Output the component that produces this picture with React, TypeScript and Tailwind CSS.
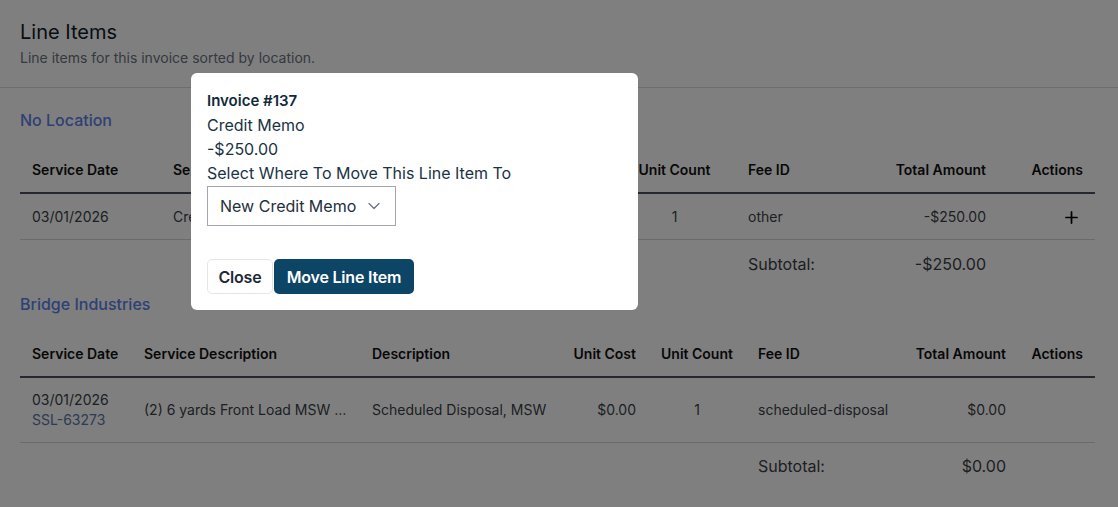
import { Plus, ChevronDown } from 'lucide-react';

type Row = {
  date: string;
  ref?: string;
  serviceDesc: string;
  desc: string;
  unitCost: string;
  unitCount: string;
  feeId: string;
  total: string;
  action?: boolean;
};

const sections: { title: string; widths: number[]; rows: Row[]; subtotal: string }[] = [
  {
    title: 'No Location',
    widths: [141, 239, 120, 93, 123, 134, 128, 97],
    rows: [
      {
        date: '03/01/2026',
        serviceDesc: 'Credit Memo',
        desc: 'Credit Memo',
        unitCost: '-$250.00',
        unitCount: '1',
        feeId: 'other',
        total: '-$250.00',
        action: true,
      },
    ],
    subtotal: '-$250.00',
  },
  {
    title: 'Bridge Industries',
    widths: [112, 228, 200, 88, 98, 154, 118, 77],
    rows: [
      {
        date: '03/01/2026',
        ref: 'SSL-63273',
        serviceDesc: '(2) 6 yards Front Load MSW Service',
        desc: 'Scheduled Disposal, MSW',
        unitCost: '$0.00',
        unitCount: '1',
        feeId: 'scheduled-disposal',
        total: '$0.00',
      },
    ],
    subtotal: '$0.00',
  },
];

function LineItemTable({ widths, rows, subtotal }: { widths: number[]; rows: Row[]; subtotal: string }) {
  return (
    <table className="w-[1075px] table-fixed border-collapse text-sm">
      <colgroup>
        {widths.map((w, i) => (
          <col key={i} style={{ width: w }} />
        ))}
      </colgroup>
      <thead>
        <tr className="h-[45px] border-b-2 border-[#4b5060] text-[#111] whitespace-nowrap">
          <th className="px-3 text-left font-semibold">Service Date</th>
          <th className="px-3 text-left font-semibold">Service Description</th>
          <th className="px-3 text-left font-semibold">Description</th>
          <th className="px-3 text-right font-semibold">Unit Cost</th>
          <th className="px-3 text-center font-semibold">Unit Count</th>
          <th className="px-3 text-left font-semibold">Fee ID</th>
          <th className="px-3 text-right font-semibold">Total Amount</th>
          <th className="px-3 text-right font-semibold">Actions</th>
        </tr>
      </thead>
      <tbody className="text-[#3a3f47] whitespace-nowrap">
        {rows.map((r, i) => (
          <tr key={i} className="border-b border-[#d4d6da]">
            <td className="px-3 py-3 leading-5">
              <div>{r.date}</div>
              {r.ref && <div className="text-[#5b76a8]">{r.ref}</div>}
            </td>
            <td className="px-3 py-3 leading-5 truncate">{r.serviceDesc}</td>
            <td className="px-3 py-3 leading-5 truncate">{r.desc}</td>
            <td className="px-3 py-3 leading-5 text-right">{r.unitCost}</td>
            <td className="px-3 py-3 leading-5 text-center">{r.unitCount}</td>
            <td className="px-3 py-3 leading-5">{r.feeId}</td>
            <td className="px-3 py-3 leading-5 text-right">{r.total}</td>
            <td className="px-3 py-3 leading-5 text-right">
              {r.action && (
                <span className="inline-flex h-5 items-center justify-end align-middle text-black">
                  <Plus className="w-[19px] h-[19px] mr-[2px]" strokeWidth={2.2} />
                </span>
              )}
            </td>
          </tr>
        ))}
        <tr className="h-12 text-base">
          <td colSpan={5}></td>
          <td className="px-3">Subtotal:</td>
          <td className="px-3 text-right">{subtotal}</td>
          <td></td>
        </tr>
      </tbody>
    </table>
  );
}

export default function App() {
  return (
    <div className="relative min-h-[507px] bg-white font-['Inter',sans-serif] text-[#111827]">
      {/* Header */}
      <div className="px-5 pt-[18px] pb-[19px] border-b border-[#d9dbe0]">
        <h1 className="text-xl leading-7">Line Items</h1>
        <p className="mt-0.5 text-sm leading-5 text-[#6b7280]">Line items for this invoice sorted by location.</p>
      </div>

      <div className="px-5 pt-5">
        {sections.map((s, i) => (
          <div key={s.title} className={i > 0 ? 'mt-1' : ''}>
            <h3 className="text-base leading-6 font-medium text-[#5a82ea]">{s.title}</h3>
            <div className="mt-4">
              <LineItemTable widths={s.widths} rows={s.rows} subtotal={s.subtotal} />
            </div>
          </div>
        ))}
      </div>

      {/* Overlay */}
      <div className="fixed inset-0 bg-black/50" />

      {/* Modal */}
      <div className="absolute left-[191px] top-[73px] w-[447px] h-[237px] bg-white rounded-md p-4 text-[#1a3344]">
        <div className="text-[15px] leading-6 font-semibold text-[#0f2a3b]">Invoice #137</div>
        <div className="text-base leading-6">Credit Memo</div>
        <div className="text-base leading-6">-$250.00</div>
        <div className="text-base leading-6">Select Where To Move This Line Item To</div>
        <div className="mt-px flex h-10 w-[189px] items-center justify-between border border-[#a3a7ad] pl-3 pr-[11px] text-base text-[#1f2f3b]">
          <span>New Credit Memo</span>
          <ChevronDown className="w-5 h-5 text-[#6b7280]" strokeWidth={1.5} />
        </div>
        <div className="mt-[33px] flex items-center gap-px">
          <button className="h-[35px] w-[66px] rounded-[5px] border border-[#e3e5e8] bg-white text-base font-semibold text-[#1f2937] tracking-[-0.2px]">
            Close
          </button>
          <button className="h-[35px] w-[140px] rounded-[5px] bg-[#0c4565] text-base font-semibold text-white tracking-[-0.2px]">
            Move Line Item
          </button>
        </div>
      </div>
    </div>
  );
}
